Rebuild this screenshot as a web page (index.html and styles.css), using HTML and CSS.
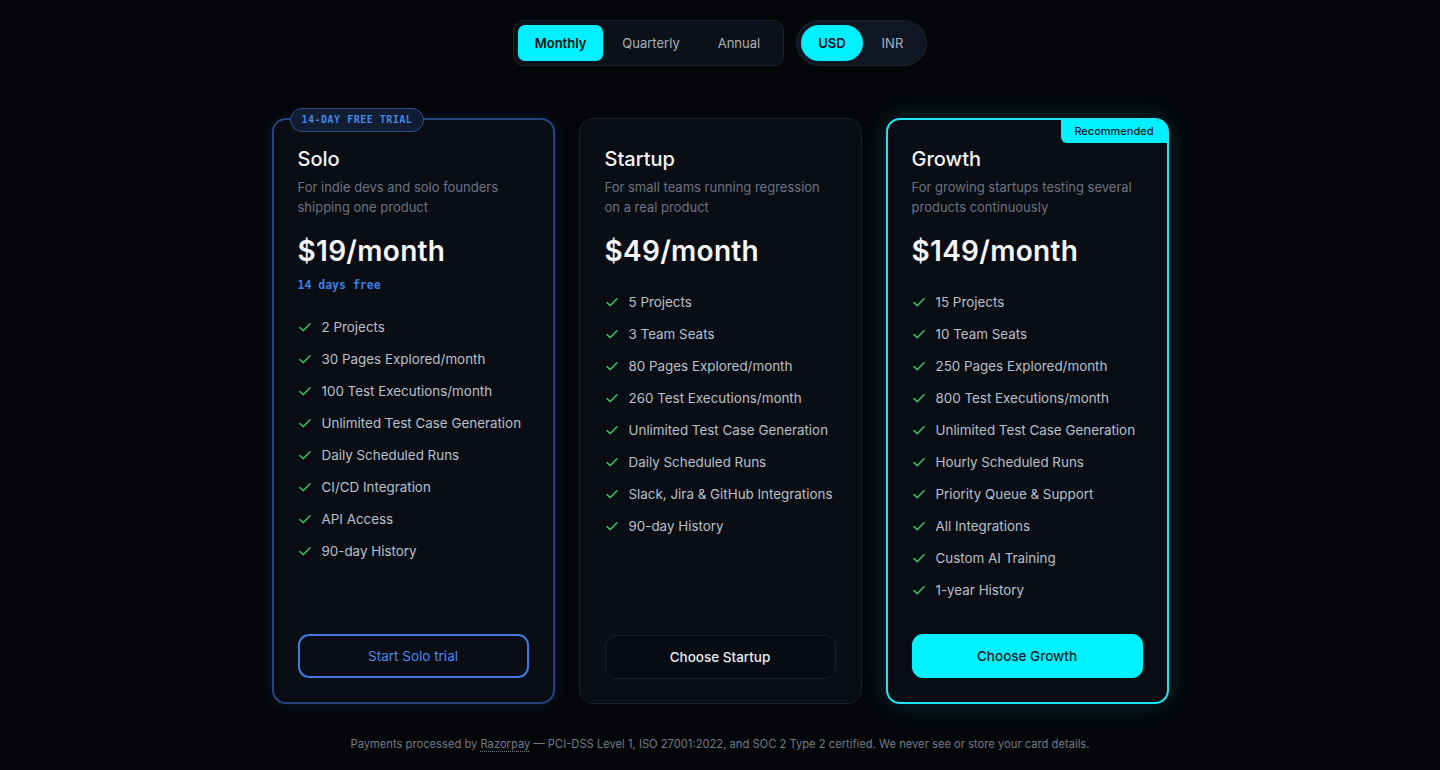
FILE: index.html
```html
<!DOCTYPE html>
<html lang="en">
<head>
    <meta charset="UTF-8">
    <meta name="viewport" content="width=device-width, initial-scale=1.0">
    <title>Pricing</title>
    <link rel="stylesheet" href="styles.css">
</head>
<body>
    <div class="page">
        <div class="toggles">
            <div class="toggle-group">
                <button class="toggle active">Monthly</button>
                <button class="toggle">Quarterly</button>
                <button class="toggle">Annual</button>
            </div>
            <div class="toggle-group round">
                <button class="toggle active">USD</button>
                <button class="toggle">INR</button>
            </div>
        </div>

        <div class="plans">
            <div class="plan plan-trial">
                <span class="trial-badge">14-DAY FREE TRIAL</span>
                <h2>Solo</h2>
                <p class="desc">For indie devs and solo founders shipping one product</p>
                <div class="price">$19/month</div>
                <div class="trial-note">14 days free</div>
                <ul class="features">
                    <li>2 Projects</li>
                    <li>30 Pages Explored/month</li>
                    <li>100 Test Executions/month</li>
                    <li>Unlimited Test Case Generation</li>
                    <li>Daily Scheduled Runs</li>
                    <li>CI/CD Integration</li>
                    <li>API Access</li>
                    <li>90-day History</li>
                </ul>
                <button class="plan-btn btn-outline">Start Solo trial</button>
            </div>

            <div class="plan">
                <h2>Startup</h2>
                <p class="desc">For small teams running regression on a real product</p>
                <div class="price">$49/month</div>
                <ul class="features">
                    <li>5 Projects</li>
                    <li>3 Team Seats</li>
                    <li>80 Pages Explored/month</li>
                    <li>260 Test Executions/month</li>
                    <li>Unlimited Test Case Generation</li>
                    <li>Daily Scheduled Runs</li>
                    <li>Slack, Jira &amp; GitHub Integrations</li>
                    <li>90-day History</li>
                </ul>
                <button class="plan-btn btn-dark">Choose Startup</button>
            </div>

            <div class="plan plan-featured">
                <span class="rec-tag">Recommended</span>
                <h2>Growth</h2>
                <p class="desc">For growing startups testing several products continuously</p>
                <div class="price">$149/month</div>
                <ul class="features">
                    <li>15 Projects</li>
                    <li>10 Team Seats</li>
                    <li>250 Pages Explored/month</li>
                    <li>800 Test Executions/month</li>
                    <li>Unlimited Test Case Generation</li>
                    <li>Hourly Scheduled Runs</li>
                    <li>Priority Queue &amp; Support</li>
                    <li>All Integrations</li>
                    <li>Custom AI Training</li>
                    <li>1-year History</li>
                </ul>
                <button class="plan-btn btn-cyan">Choose Growth</button>
            </div>
        </div>

        <p class="footnote">Payments processed by <span class="link">Razorpay</span> — PCI-DSS Level 1, ISO 27001:2022, and SOC 2 Type 2 certified. We never see or store your card details.</p>
    </div>
</body>
</html>
```

FILE: styles.css
```css
html, body {
    margin: 0;
    height: 100%;
    background: #050609;
    font-family: 'Inter', 'Noto Sans', sans-serif;
    color: #e6e8ec;
}
.page {
    display: flex;
    flex-direction: column;
    align-items: center;
    padding-top: 20px;
}

/* billing period / currency switches */
.toggles {
    display: flex;
    gap: 12px;
}
.toggle-group {
    display: flex;
    padding: 4px;
    background: #0c1018;
    border: 1px solid #1b2130;
    border-radius: 10px;
}
.toggle-group.round {
    border-radius: 23px;
    background: #111722;
}
.toggle {
    height: 36px;
    padding: 0 17px;
    border: none;
    border-radius: 7px;
    background: transparent;
    color: #a8b0bd;
    font-family: inherit;
    font-size: 13px;
    cursor: pointer;
}
.toggle-group .toggle:not(:first-child) {
    padding: 0 19px;
}
.toggle.active {
    background: #00f0ff;
    color: #071018;
    font-weight: 600;
}
.round .toggle {
    border-radius: 18px;
}

/* plan cards */
.plans {
    display: flex;
    gap: 24px;
    margin-top: 52px;
}
.plan {
    position: relative;
    box-sizing: border-box;
    width: 283px;
    height: 586px;
    padding: 26px 25px 24px;
    display: flex;
    flex-direction: column;
    background: #0a0d14;
    border: 1px solid #1a1f2a;
    border-radius: 14px;
}
.plan-trial {
    border: 2px solid #27467e;
    padding: 25px 24px 24px;
    box-shadow: 0 0 14px rgba(39, 80, 160, 0.25);
}
.plan-featured {
    border: 2px solid #1fe6ee;
    padding: 25px 24px 24px;
    box-shadow: 0 0 26px rgba(0, 220, 240, 0.18);
}
.plan h2 {
    margin: 0;
    font-size: 20px;
    line-height: 28px;
    font-weight: 500;
    color: #f2f4f7;
}
.desc {
    margin: 4px 0 0;
    font-size: 13px;
    line-height: 20px;
    color: #6c7380;
}
.price {
    margin-top: 17px;
    font-size: 28px;
    line-height: 34px;
    font-weight: 600;
    letter-spacing: 0.3px;
    color: #f5f6f8;
}
.trial-note {
    margin-top: 8px;
    font-family: 'DejaVu Sans Mono', monospace;
    font-size: 11.5px;
    line-height: 18px;
    font-weight: 700;
    color: #3d7fe0;
}
.features {
    list-style: none;
    margin: 18px 0 0;
    padding: 0;
}
.trial-note + .features {
    margin-top: 17px;
}
.features li {
    display: flex;
    align-items: center;
    gap: 10px;
    height: 32px;
    font-size: 13.4px;
    color: #b9c0ca;
}
.features li::before {
    content: '';
    width: 14px;
    height: 14px;
    flex: none;
    background: url("data:image/svg+xml,%3Csvg xmlns='http://www.w3.org/2000/svg' viewBox='0 0 14 14'%3E%3Cpath d='M2 7.5l3.2 3.2L12 3.8' fill='none' stroke='%2334c46a' stroke-width='1.5' stroke-linecap='round' stroke-linejoin='round'/%3E%3C/svg%3E") no-repeat center;
}

.plan-btn {
    margin-top: auto;
    height: 44px;
    border-radius: 11px;
    font-family: inherit;
    font-size: 13.5px;
    cursor: pointer;
}
.btn-outline {
    background: transparent;
    border: 2px solid #3b7be0;
    color: #4a8af0;
}
.btn-dark {
    background: #080b11;
    border: 1px solid #1a1f2a;
    color: #e8eaee;
    font-weight: 500;
}
.btn-cyan {
    background: #00f2ff;
    border: none;
    color: #0a1a22;
    font-weight: 500;
}

.trial-badge {
    position: absolute;
    top: -12px;
    left: 16px;
    padding: 0 11px;
    height: 22px;
    line-height: 22px;
    background: #111d33;
    border: 1px solid #2c4d85;
    border-radius: 12px;
    font-family: 'DejaVu Sans Mono', monospace;
    font-size: 10px;
    font-weight: 700;
    letter-spacing: 0.5px;
    color: #4a86e6;
}
.rec-tag {
    position: absolute;
    top: 0;
    right: 0;
    padding: 0 13px;
    height: 23px;
    line-height: 23px;
    background: #00f0ff;
    color: #08141a;
    font-size: 11px;
    font-weight: 500;
    border-radius: 0 10px 0 6px;
}

.footnote {
    margin: 33px 0 0;
    font-size: 11.2px;
    color: #737a86;
}
.link {
    text-decoration: underline dotted;
    text-underline-offset: 3px;
}
```
